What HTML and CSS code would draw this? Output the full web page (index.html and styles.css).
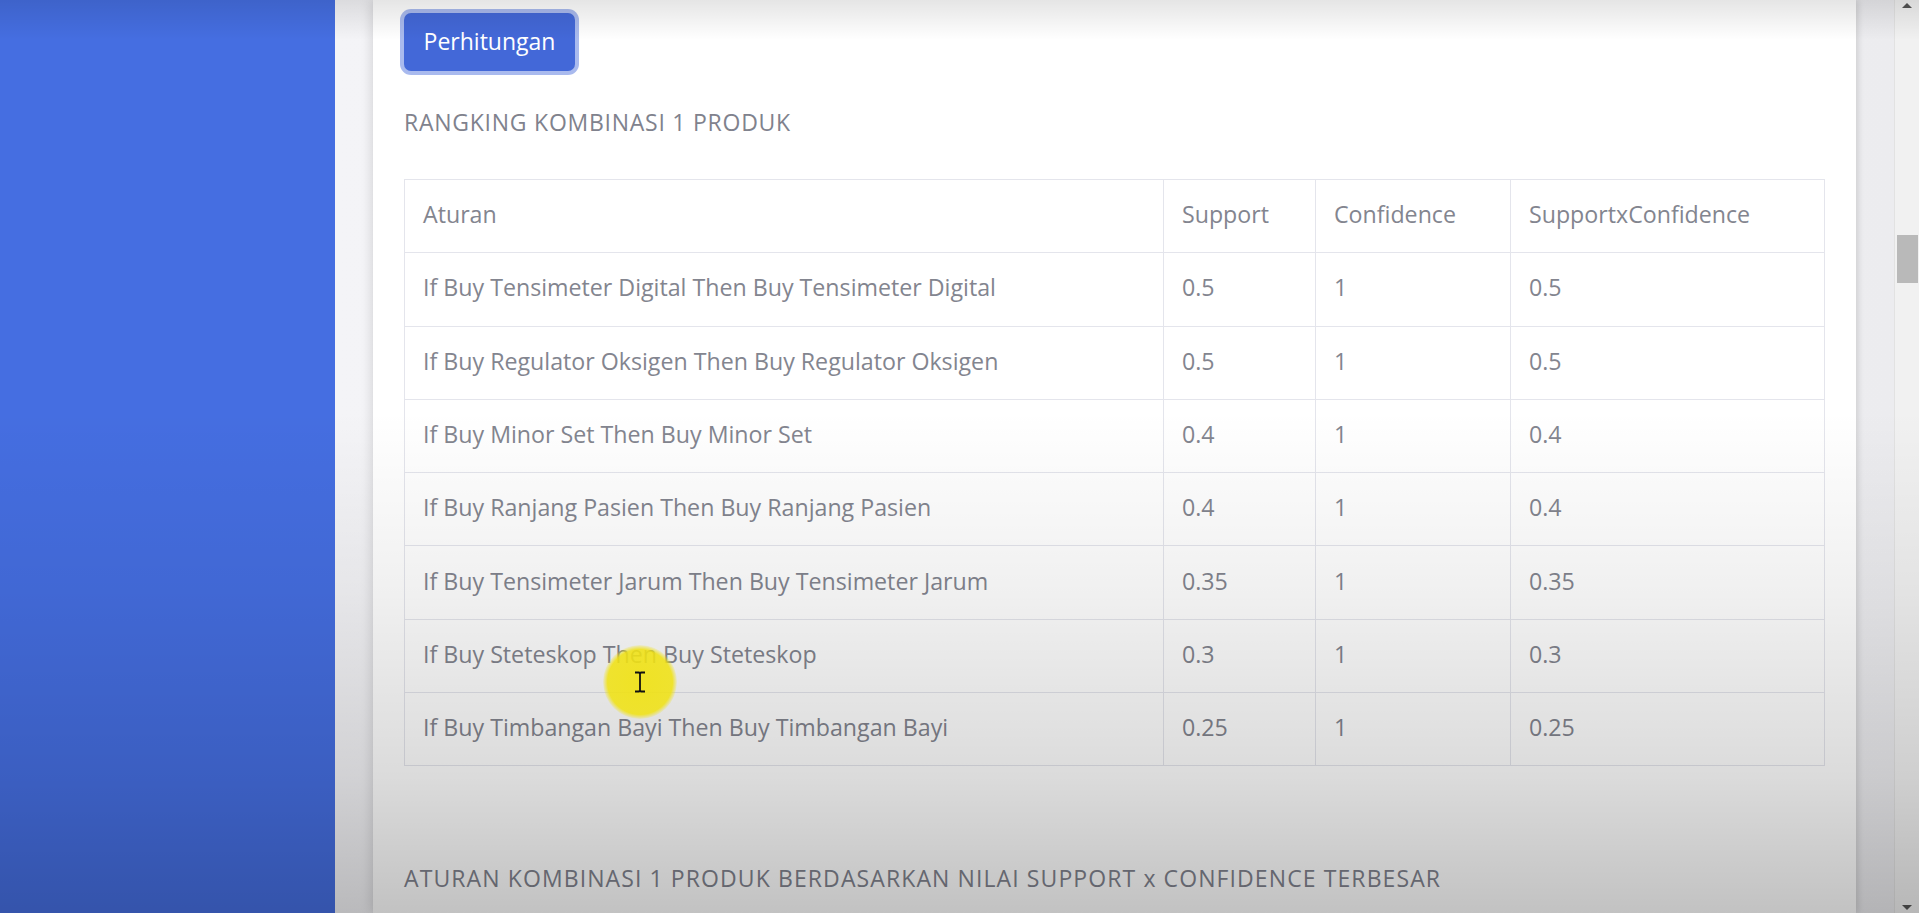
FILE: index.html
```html
<!DOCTYPE html>
<html lang="id">
<head>
<meta charset="utf-8">
<title>Perhitungan</title>
<link rel="stylesheet" href="styles.css">
</head>
<body>
<div class="app">
  <aside class="sidebar"></aside>
  <main class="content">
    <div class="card">
      <div class="card-body">
        <button class="btn">Perhitungan</button>
        <h6 class="title">RANGKING KOMBINASI 1 PRODUK</h6>
        <table class="rank-table">
          <colgroup>
            <col class="c-rule">
            <col class="c-sup">
            <col class="c-conf">
            <col class="c-sxc">
          </colgroup>
          <thead>
            <tr><th>Aturan</th><th>Support</th><th>Confidence</th><th>SupportxConfidence</th></tr>
          </thead>
          <tbody>
            <tr><td>If Buy Tensimeter Digital Then Buy Tensimeter Digital</td><td>0.5</td><td>1</td><td>0.5</td></tr>
            <tr><td>If Buy Regulator Oksigen Then Buy Regulator Oksigen</td><td>0.5</td><td>1</td><td>0.5</td></tr>
            <tr><td>If Buy Minor Set Then Buy Minor Set</td><td>0.4</td><td>1</td><td>0.4</td></tr>
            <tr><td>If Buy Ranjang Pasien Then Buy Ranjang Pasien</td><td>0.4</td><td>1</td><td>0.4</td></tr>
            <tr><td>If Buy Tensimeter Jarum Then Buy Tensimeter Jarum</td><td>0.35</td><td>1</td><td>0.35</td></tr>
            <tr><td>If Buy Steteskop Then Buy Steteskop</td><td>0.3</td><td>1</td><td>0.3</td></tr>
            <tr><td>If Buy Timbangan Bayi Then Buy Timbangan Bayi</td><td>0.25</td><td>1</td><td>0.25</td></tr>
          </tbody>
        </table>
        <h6 class="title title-2">ATURAN KOMBINASI 1 PRODUK BERDASARKAN NILAI SUPPORT x CONFIDENCE TERBESAR</h6>
      </div>
    </div>
  </main>
  <div class="scrollbar">
    <span class="arrow arrow-up"></span>
    <div class="thumb"></div>
    <span class="arrow arrow-down"></span>
  </div>
</div>
<div class="vignette"></div>
<div class="cursor-hl">
  <svg class="ibeam" width="12" height="22" viewBox="0 0 12 22"><path d="M1 1.5h4l1 1 1-1h4M6 2.5v17M1 20.5h4l1-1 1 1h4" fill="none" stroke="#111" stroke-width="1.8"/></svg>
</div>
</body>
</html>
```

FILE: styles.css
```css
html, body {
  margin: 0;
  padding: 0;
  height: 100%;
  overflow: hidden;
}
body {
  font-family: "Open Sans", Lato, Arial, sans-serif;
  color: #83858f;
  background: #f3f3f6;
}
.app {
  display: flex;
  height: 913px;
}
.sidebar {
  width: 335px;
  flex: 0 0 335px;
  background: #456ee1;
}
.content {
  flex: 1 1 auto;
  display: flex;
  background: linear-gradient(90deg, #f4f4f7 0, #ececef 100%);
  min-width: 0;
}
.card {
  flex: 1 1 auto;
  margin: 0 38px;
  background: #ffffff;
  box-shadow: -3px 0 10px rgba(0,0,0,0.10), 3px 0 6px rgba(0,0,0,0.08);
}
.card-body {
  padding: 13px 31px 0 31px;
}
.btn {
  display: block;
  height: 58px;
  width: 171px;
  padding: 0 0 2px 0;
  border: none;
  border-radius: 7px;
  background: #4368d8;
  color: #ffffff;
  font-family: inherit;
  font-size: 23px;
  box-shadow: 0 0 0 4px rgba(98, 130, 224, 0.55);
}
.title {
  margin: 0;
  font-size: 23px;
  font-weight: 400;
  line-height: 30px;
  letter-spacing: 0.75px;
  white-space: nowrap;
  color: #80828d;
}
.btn + .title {
  margin-top: 36px;
}
.rank-table {
  width: 100%;
  margin-top: 42px;
  border-collapse: collapse;
  table-layout: fixed;
  font-size: 23.2px;
  color: #83858f;
}
.c-rule { width: 759px; }
.c-sup { width: 152px; }
.c-conf { width: 195px; }
.c-sxc { width: auto; }
.rank-table th,
.rank-table td {
  height: 68.3px;
  padding: 0 18px 4px 18px;
  border: 1px solid #e4e5ec;
  text-align: left;
  font-weight: 400;
  line-height: 30px;
  white-space: nowrap;
}
.title-2 {
  margin-top: 97px;
  letter-spacing: 1.1px;
}
.scrollbar {
  flex: 0 0 24px;
  display: flex;
  flex-direction: column;
  align-items: center;
  background: #f1f1f1;
  border-left: 1px solid #e2e2e2;
}
.arrow {
  width: 0;
  height: 0;
  border-left: 5px solid transparent;
  border-right: 5px solid transparent;
}
.arrow-up {
  margin-top: 3px;
  border-bottom: 5px solid #555;
}
.arrow-down {
  margin-top: auto;
  margin-bottom: 3px;
  border-top: 5px solid #555;
}
.thumb {
  margin-top: 227px;
  width: 21px;
  height: 48px;
  background: #b9b9b9;
}
.vignette {
  position: absolute;
  inset: 0;
  pointer-events: none;
  background:
    linear-gradient(180deg, rgba(0,0,0,0.10) 0, rgba(0,0,0,0) 40px),
    linear-gradient(180deg, rgba(0,0,0,0) 0, rgba(0,0,0,0) 45%, rgba(0,0,0,0.06) 65%, rgba(0,0,0,0.14) 85%, rgba(0,0,0,0.24) 100%);
}
.cursor-hl {
  position: absolute;
  left: 603px;
  top: 645px;
  width: 74px;
  height: 74px;
  border-radius: 50%;
  background: radial-gradient(circle, rgba(240,226,20,0.92) 0, rgba(240,226,20,0.88) 62%, rgba(240,226,20,0) 72%);
  display: flex;
  align-items: center;
  justify-content: center;
}
.ibeam {
  display: block;
}
```
